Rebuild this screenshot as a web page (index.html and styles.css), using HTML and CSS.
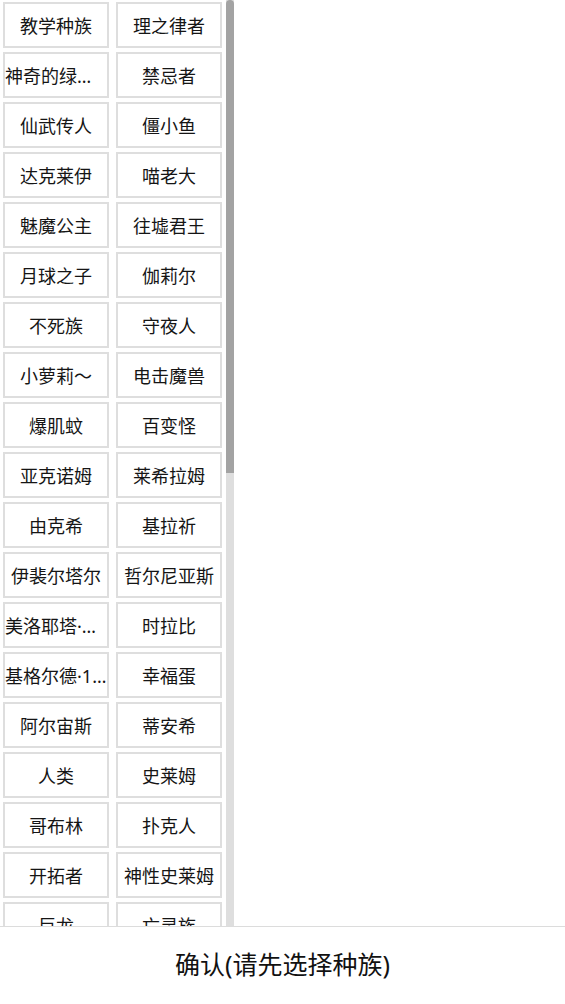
FILE: index.html
```html
<!DOCTYPE html>
<html lang="zh-CN">
<head>
<meta charset="utf-8">
<title>选择种族</title>
<link rel="stylesheet" href="styles.css">
</head>
<body>
<div class="page">
  <div class="body-row">
    <div class="list">
      <div class="grid">
        <button class="item">教学种族</button>
        <button class="item">理之律者</button>
        <button class="item">神奇的绿色小人</button>
        <button class="item">禁忌者</button>
        <button class="item">仙武传人</button>
        <button class="item">僵小鱼</button>
        <button class="item">达克莱伊</button>
        <button class="item">喵老大</button>
        <button class="item">魅魔公主</button>
        <button class="item">往墟君王</button>
        <button class="item">月球之子</button>
        <button class="item">伽莉尔</button>
        <button class="item">不死族</button>
        <button class="item">守夜人</button>
        <button class="item">小萝莉～</button>
        <button class="item">电击魔兽</button>
        <button class="item">爆肌蚊</button>
        <button class="item">百变怪</button>
        <button class="item">亚克诺姆</button>
        <button class="item">莱希拉姆</button>
        <button class="item">由克希</button>
        <button class="item">基拉祈</button>
        <button class="item">伊裴尔塔尔</button>
        <button class="item">哲尔尼亚斯</button>
        <button class="item">美洛耶塔·歌声形态</button>
        <button class="item">时拉比</button>
        <button class="item">基格尔德·10%形态</button>
        <button class="item">幸福蛋</button>
        <button class="item">阿尔宙斯</button>
        <button class="item">蒂安希</button>
        <button class="item">人类</button>
        <button class="item">史莱姆</button>
        <button class="item">哥布林</button>
        <button class="item">扑克人</button>
        <button class="item">开拓者</button>
        <button class="item">神性史莱姆</button>
        <button class="item">巨龙</button>
        <button class="item">亡灵族</button>
        <button class="item">精灵族</button>
        <button class="item">矮人</button>
        <button class="item">兽人</button>
        <button class="item">天使</button>
        <button class="item">恶魔</button>
        <button class="item">吸血鬼</button>
      </div>
    </div>
    <div class="scrollbar">
      <div class="thumb"></div>
    </div>
  </div>
  <div class="footer">
    <button class="confirm">确认(请先选择种族)</button>
  </div>
</div>
</body>
</html>
```

FILE: styles.css
```css
html, body {
  margin: 0;
  padding: 0;
  background: #ffffff;
  font-family: "Noto Sans", "Noto Sans CJK SC", sans-serif;
}

.page {
  display: flex;
  flex-direction: column;
  height: 1004px;
}

.body-row {
  display: flex;
  flex-direction: row;
  height: 926px;
  flex: none;
}

.list {
  width: 226px;
  height: 926px;
  overflow: hidden;
  flex: none;
}

.scrollbar {
  width: 8px;
  height: 926px;
  background: #dedede;
  flex: none;
}

.thumb {
  width: 8px;
  height: 473px;
  background: #a3a3a3;
  border-radius: 4px 4px 0 0;
}

.grid {
  display: grid;
  grid-template-columns: 106px 106px;
  column-gap: 7px;
  row-gap: 4px;
  padding: 2px 3px;
}

.item {
  box-sizing: border-box;
  height: 46px;
  width: 106px;
  margin: 0;
  padding: 2px 0 0 0;
  background: #ffffff;
  border: 2px solid #dedede;
  border-radius: 0;
  font-family: "Noto Sans", "Noto Sans CJK SC", sans-serif;
  font-size: 18px;
  color: #151515;
  text-align: center;
  white-space: nowrap;
  overflow: hidden;
  text-overflow: ellipsis;
  line-height: 40px;
}

.footer {
  flex: 1;
  border-top: 1px solid #dcdcdc;
  display: flex;
  align-items: center;
  justify-content: center;
}

.confirm {
  background: none;
  border: none;
  padding: 0;
  margin: 0 0 6px 0;
  font-family: "Noto Sans", "Noto Sans CJK SC", sans-serif;
  font-size: 25px;
  color: #111111;
}
```
